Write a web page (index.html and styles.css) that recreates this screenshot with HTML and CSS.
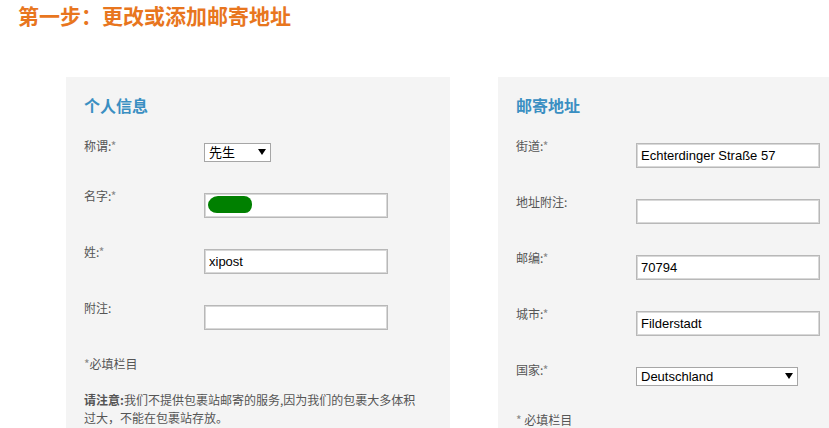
FILE: index.html
```html
<!DOCTYPE html>
<html lang="zh">
<head>
<meta charset="utf-8">
<title>更改或添加邮寄地址</title>
<link rel="stylesheet" href="styles.css">
</head>
<body>
<h1 class="title">第一步：更改或添加邮寄地址</h1>
<div class="panels">
  <section class="panel">
    <h2 class="panel-title">个人信息</h2>
    <div class="row">
      <label class="label">称谓:<span class="req">*</span></label>
      <span class="select-wrap select-sm">
        <select class="select"><option>先生</option></select>
        <span class="arrow"></span>
      </span>
    </div>
    <div class="row">
      <label class="label">名字:<span class="req">*</span></label>
      <span class="input-wrap">
        <input class="input" type="text" value="">
        <span class="redact"></span>
      </span>
    </div>
    <div class="row">
      <label class="label">姓:<span class="req">*</span></label>
      <input class="input" type="text" value="xipost">
    </div>
    <div class="row">
      <label class="label">附注:</label>
      <input class="input" type="text" value="">
    </div>
    <p class="hint"><span class="req">*</span>必填栏目</p>
    <p class="note"><strong>请注意:</strong>我们不提供包裹站邮寄的服务,因为我们的包裹大多体积过大，不能在包裹站存放。</p>
  </section>
  <section class="panel">
    <h2 class="panel-title">邮寄地址</h2>
    <div class="row">
      <label class="label">街道:<span class="req">*</span></label>
      <input class="input" type="text" value="Echterdinger Straße 57">
    </div>
    <div class="row">
      <label class="label">地址附注:</label>
      <input class="input" type="text" value="">
    </div>
    <div class="row">
      <label class="label">邮编:<span class="req">*</span></label>
      <input class="input" type="text" value="70794">
    </div>
    <div class="row">
      <label class="label">城市:<span class="req">*</span></label>
      <input class="input" type="text" value="Filderstadt">
    </div>
    <div class="row">
      <label class="label">国家:<span class="req">*</span></label>
      <span class="select-wrap select-lg">
        <select class="select"><option>Deutschland</option></select>
        <span class="arrow"></span>
      </span>
    </div>
    <p class="hint"><span class="req">*</span> 必填栏目</p>
  </section>
</div>
</body>
</html>
```

FILE: styles.css
```css
html {
  overflow: hidden;
}
body {
  margin: 0;
  background: #ffffff;
  font-family: "Noto Sans CJK SC", "Liberation Sans", sans-serif;
  color: #555555;
}
.title {
  margin: 0;
  padding: 5px 0 0 18px;
  font-family: "Liberation Serif", "Noto Sans CJK SC", serif;
  font-size: 21px;
  line-height: 24px;
  font-weight: bold;
  color: #e8761e;
}
.panels {
  display: flex;
  gap: 48px;
  margin-top: 48px;
  padding-left: 66px;
}
.panel {
  flex: none;
  width: 384px;
  min-height: 380px;
  box-sizing: border-box;
  padding: 17px 18px 20px;
  background: #f4f4f4;
}
.panel-title {
  margin: 0 0 21px;
  font-size: 16px;
  line-height: 22px;
  font-weight: bold;
  color: #3a8fc2;
}
.row {
  display: flex;
  align-items: flex-start;
  margin-bottom: 25px;
}
.label {
  flex: none;
  width: 120px;
  font-size: 12px;
  line-height: 18px;
  color: #555555;
}
.req {
  color: #888888;
}
.input,
.input-wrap {
  flex: none;
  margin-top: 6px;
}
.input-wrap {
  position: relative;
  display: block;
  width: 184px;
  height: 25px;
}
.input-wrap .input {
  margin-top: 0;
}
.input {
  display: block;
  width: 184px;
  height: 25px;
  box-sizing: border-box;
  padding: 0 4px;
  border: 1px solid #b8b8b8;
  box-shadow: inset 0 0 0 1px #d8d8d8;
  background: #ffffff;
  font-family: "Liberation Sans", Arial, sans-serif;
  font-size: 13px;
  color: #000000;
  outline: none;
}
.redact {
  position: absolute;
  left: 4px;
  top: 3px;
  width: 44px;
  height: 17px;
  background: #008000;
  border-radius: 10px 8px 7px 9px / 9px 8px 8px 8px;
}
.select-wrap {
  position: relative;
  display: block;
  flex: none;
  margin-top: 6px;
}
.select-sm {
  width: 67px;
}
.select-lg {
  width: 162px;
}
.select {
  display: block;
  width: 100%;
  height: 19px;
  box-sizing: border-box;
  padding: 0 0 0 4px;
  border: 1px solid #a6a6a6;
  border-radius: 0;
  background: #ffffff;
  -webkit-appearance: none;
  appearance: none;
  font-family: "Liberation Sans", "Noto Sans CJK SC", sans-serif;
  font-size: 13px;
  line-height: 17px;
  color: #000000;
}
.arrow {
  position: absolute;
  right: 5px;
  top: 6px;
  width: 0;
  height: 0;
  border-left: 4px solid transparent;
  border-right: 4px solid transparent;
  border-top: 6px solid #000000;
  pointer-events: none;
}
.hint {
  margin: 0;
  font-size: 12px;
  line-height: 18px;
}
.note {
  margin: 18px 0 0;
  max-width: 336px;
  font-size: 12px;
  line-height: 18px;
}
.note strong {
  color: #555555;
}
```
